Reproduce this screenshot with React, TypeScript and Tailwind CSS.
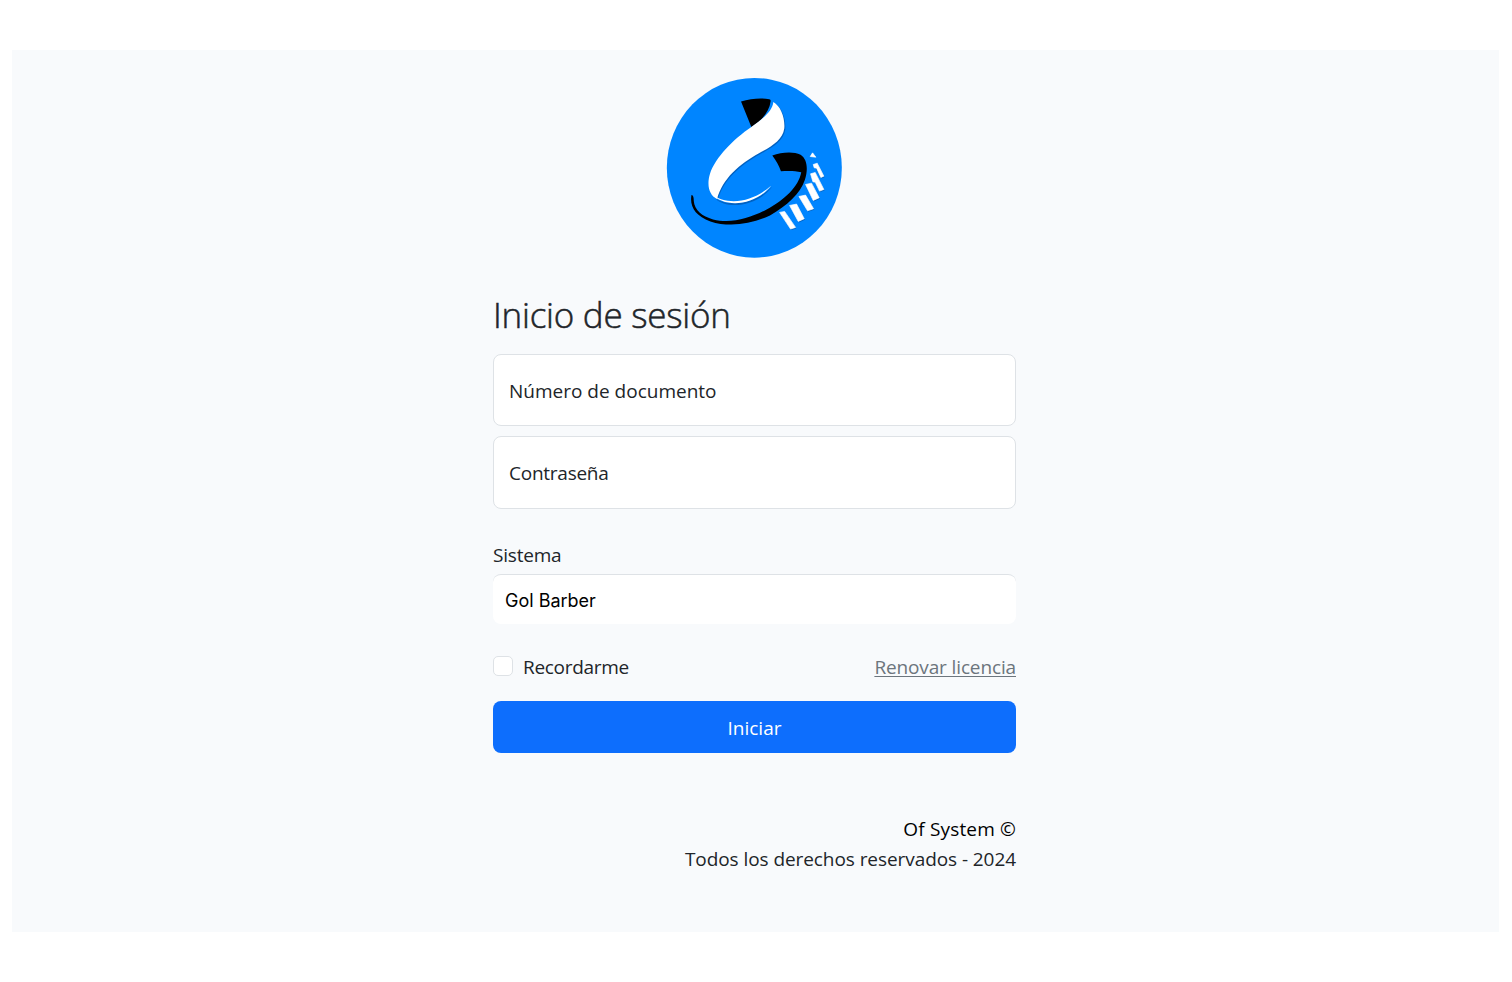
import React from "react";

function Logo() {
  return (
    <svg width="176" height="180" viewBox="31 28 528 541" aria-hidden="true">
      <ellipse cx="296" cy="298" rx="263" ry="270" fill="#0085ff" />
      <g fill="#003f86" opacity="0.5" transform="translate(3 3)">
        <path d="M353 100C376 112 389 150 386 180C381 213 351 233 310 254C252 286 200 330 184 390C160 378 152 350 163 315C178 268 235 210 286 176C326 148 351 125 353 100Z" />
        <path d="M176 388C225 416 298 400 347 352C300 412 212 421 176 388Z" />
        <path d="M371 432L386 429L419 477L404 482ZM401 411L422 407L445 451L427 459ZM429 384L449 380L473 421L455 427ZM449 348L467 344L490 388L472 396ZM464 316L478 312L504 363L491 368ZM472 288L484 284L504 323L495 327Z" />
      </g>
      <path fill="#000" d="M256 99C285 90 316 87 341 92Q346 93 345 98C341 129 319 156 287 175Z" />
      <path fill="#fff" d="M353 100C376 112 389 150 386 180C381 213 351 233 310 254C252 286 200 330 184 392C160 380 152 350 163 315C178 268 235 210 286 176C326 148 351 125 353 100Z" />
      <path fill="#fff" d="M166 376C221 418 298 396 347 351C300 411 210 422 166 376Z" />
      <path fill="#000" d="M350 261C377 251 413 247 435 259C457 273 457 307 448 334C434 376 393 413 343 441C286 469 218 477 164 459C119 443 101 415 107 380C113 380 114 390 114 398C116 426 139 444 172 453C227 467 283 449 333 423C386 395 430 353 437 311C417 306 395 307 376 308C370 291 361 276 350 261Z" />
      <g fill="#fff" stroke="#fff" strokeWidth="2" transform="translate(1 0)">
        <path d="M371 432L386 429L419 477L404 482Z" />
        <path d="M401 411L422 407L445 451L427 459Z" />
        <path d="M429 384L449 380L473 421L455 427Z" />
        <path d="M449 348L467 344L490 388L472 396Z" />
        <path d="M464 316L478 312L504 363L491 368L478 341L471 340Z" />
        <path d="M472 288L484 284L504 323L495 327L482 299L475 298Z" />
        <path d="M470 253L480 266L463 264Z" />
      </g>
    </svg>
  );
}

export default function App() {
  return (
    <div className="h-[982px] bg-white pt-[50px] pl-3 font-['Open_Sans',sans-serif] text-[19px] leading-[30px] text-[#212529]">
      <main className="flex h-[882px] w-[1487px] flex-col bg-[#f8fafc] pt-7 pl-[481px]">
        <form className="flex w-[523px] flex-col">
          <div className="flex h-[180px] justify-center pr-px">
            <Logo />
          </div>
          <h1 className="mt-[33px] h-[48px] text-[35px] leading-[48px] font-light tracking-[-0.25px] whitespace-nowrap [-webkit-text-stroke:0.5px_#212529]">
            Inicio de sesión
          </h1>
          <div className="mt-[15px] flex h-[72px] items-center rounded-[8px] border border-[#dee2e6] bg-white px-[15px] pt-[2px]">
            <span>Número de documento</span>
          </div>
          <div className="mt-[10px] flex h-[73px] items-center rounded-[8px] border border-[#dee2e6] bg-white px-[15px]">
            <span className="tracking-[-0.25px]">Contraseña</span>
          </div>
          <label className="mt-[31px] tracking-[-0.2px]">Sistema</label>
          <div className="mt-[4px] flex h-[50px] items-center rounded-[8px] border-t border-[#dee2e6] bg-white px-3 pt-[2px] font-['Inter',sans-serif] text-[18px] text-black">
            <span>Gol Barber</span>
          </div>
          <div className="mt-[28px] flex h-[30px] items-center justify-between">
            <label className="flex items-center gap-[10px]">
              <span className="mb-[2px] h-5 w-5 rounded-[5px] border border-[#dee2e6] bg-white" />
              <span className="tracking-[-0.3px]">Recordarme</span>
            </label>
            <a className="tracking-[-0.13px] text-[#6c757d] underline decoration-1 underline-offset-2">Renovar licencia</a>
          </div>
          <button type="button" className="mt-[19px] h-[52px] rounded-[8px] bg-[#0d6efd] pt-[2px] text-white">
            Iniciar
          </button>
          <footer className="mt-[61px] flex flex-col items-end">
            <span className="tracking-[0.16px] text-black">Of System ©</span>
            <span className="tracking-[-0.07px]">Todos los derechos reservados - 2024</span>
          </footer>
        </form>
      </main>
    </div>
  );
}
